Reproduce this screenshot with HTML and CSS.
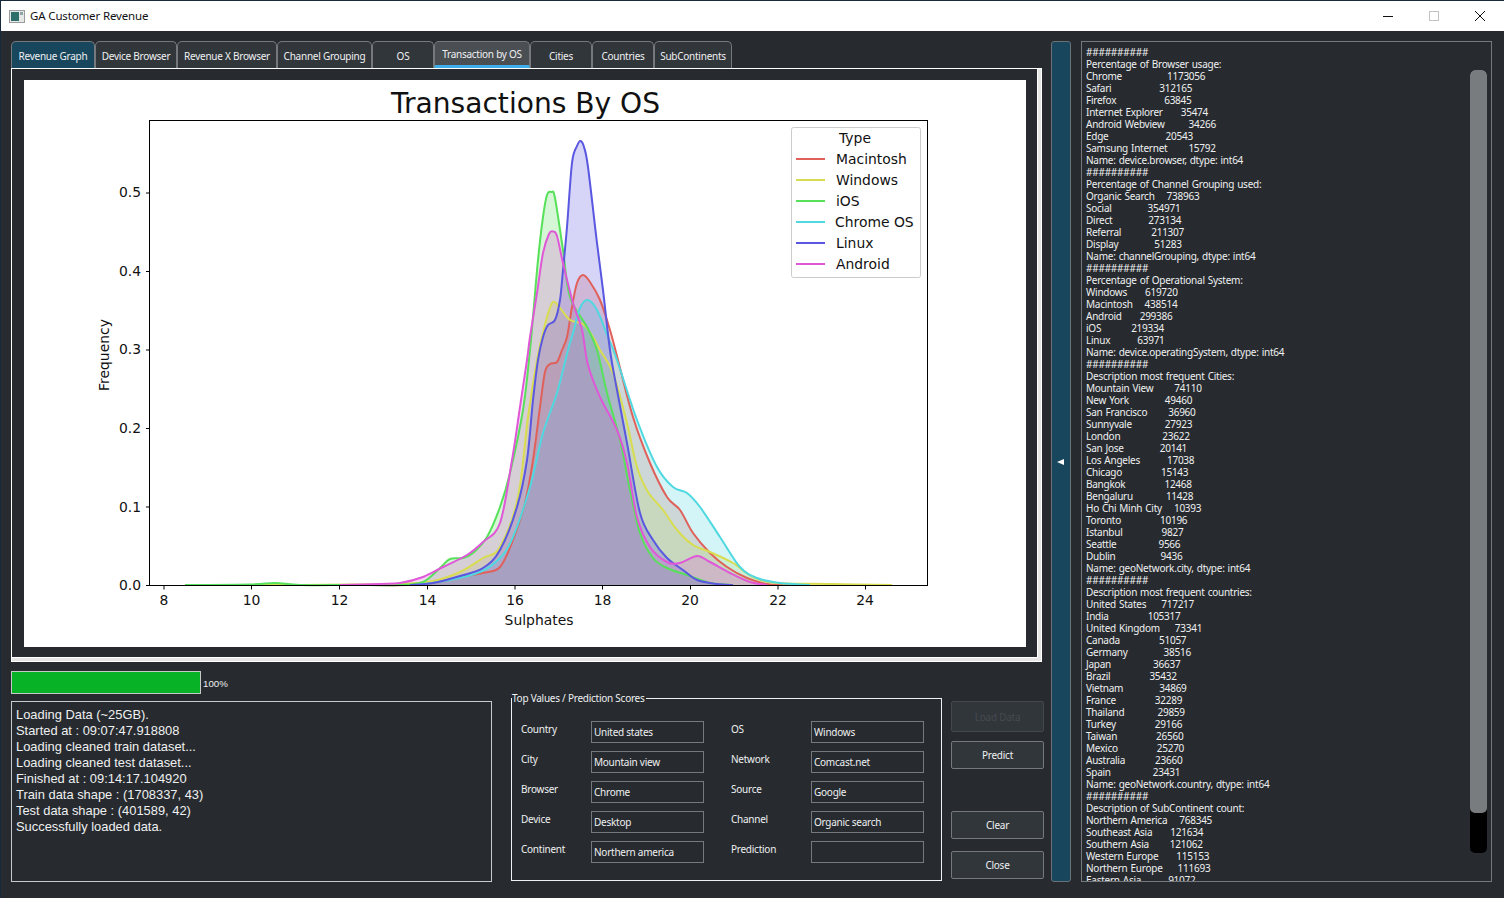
FILE: index.html
```html
<!DOCTYPE html>
<html>
<head>
    <title>GA Customer Revenue</title>
    <link rel="stylesheet" href="styles.css">
</head>
<body>
    <!-- Title bar -->
    <header class="titlebar">
        <svg class="app-icon" width="16" height="13" viewBox="0 0 16 13">
            <rect x="0.5" y="0.5" width="15" height="12" fill="#e6e8e8" stroke="#9a9d9d"/>
            <rect x="2" y="2" width="8" height="9" fill="#2f6f6a"/>
            <rect x="11" y="2" width="3" height="3" fill="#8fa5a5"/>
        </svg>
        <span class="app-title">GA Customer Revenue</span>
        <div class="win-controls">
            <svg width="46" height="30" viewBox="0 0 46 30"><path d="M18 15.5h10" stroke="#111" fill="none"/></svg>
            <svg width="46" height="30" viewBox="0 0 46 30"><rect x="18.5" y="10.5" width="9" height="9" stroke="#c4c4c4" fill="none"/></svg>
            <svg width="46" height="30" viewBox="0 0 46 30"><path d="M18 10l10 10M28 10l-10 10" stroke="#111" fill="none"/></svg>
        </div>
    </header>

    <div class="main">
        <div class="left">
            <nav class="tabs">
                <div class="tab first">Revenue Graph</div>
                <div class="tab">Device Browser</div>
                <div class="tab">Revenue X Browser</div>
                <div class="tab">Channel Grouping</div>
                <div class="tab">OS</div>
                <div class="tab current">Transaction by OS</div>
                <div class="tab">Cities</div>
                <div class="tab">Countries</div>
                <div class="tab">SubContinents</div>
            </nav>

            <section class="pane">
                <svg class="plot" width="1002" height="567" viewBox="24 80 1002 567">
                    <text class="plot-title" x="525.500" y="113">Transactions By OS</text>

                    <!-- KDE curves, chart.js smooths the points and adds the outlines -->
                    <g class="kde-fills">
                        <path class="mac" data-pts="185,585 300,585 350,585 407,585 433,583 460,577 483,573 500,567 513,540 525,503 533,460 540,407 545,372 550,364 557,362 562,350 567,337 572,307 577,283 583,275 590,282 600,300 610,330 618,360 633,417 650,463 667,497 680,510 693,533 710,553 727,567 747,578 767,584 790,585"/>
                        <path class="win" data-pts="185,585 300,585 360,584.5 400,584 433,581 460,572 483,558 500,547 518,497 528,417 537,360 543,333 547,317 553,302 560,308 570,320 583,324 593,337 600,350 613,373 627,423 637,467 648,492 663,510 677,530 693,545 710,552 733,563 753,577 777,583 830,584 892,585"/>
                        <path class="ios" data-pts="185,585 250,584.5 275,583 300,585 350,585 400,585 423,582 440,568 450,559 463,558 473,553 487,537 500,507 510,473 523,410 530,350 533,317 538,260 543,217 547,195 551.5,192 555,198 563,250 570,297 587,327 597,350 607,393 620,440 630,490 640,533 653,558 667,568 687,575 710,583 733,585"/>
                        <path class="chr" data-pts="417,585 450,580 480,572 500,558 513,537 530,487 543,433 557,393 568,350 573,333 580,308 587.5,300 597,310 608,337 617,360 637,420 657,467 673,487 687,493 700,507 720,537 740,567 757,578 780,583 810,585"/>
                        <path class="lin" data-pts="410,585 433,583 460,576 483,568 500,550 517,507 527,460 533,400 538,360 543,337 548,325 555,320 560,300 563,270 567,227 572,163 577,146 580.5,141 584,147 588,167 597,243 603,290 610,350 617,390 627,443 640,513 653,540 667,558 683,570 697,580 717,584 733,585"/>
                        <path class="and" data-pts="340,585 380,584 400,583 423,577 443,567 467,555 483,542 500,523 512,460 520,407 527,360 530,337 537,293 543,253 549,234 553,231.5 557,236 563,263 573,303 582,330 588,365 600,397 617,430 627,463 637,517 650,547 667,562 680,563 697,556 710,562 730,573 750,582 767,585"/>
                    </g>
                    <g class="kde-lines"></g>

                    <!-- axes -->
                    <rect class="frame" x="149.500" y="120.500" width="778" height="465"/>
                    <path class="ticks" d="M146 585h4M146 506.500h4M146 428h4M146 349.500h4M146 271h4M146 192.500h4M164 585v4M251.500 585v4M339.500 585v4M427.500 585v4M515 585v4M602.500 585v4M690.500 585v4M778 585v4M865.500 585v4"/>
                    <g class="y-labels">
                        <text x="141" y="590">0.0</text>
                        <text x="141" y="512">0.1</text>
                        <text x="141" y="433">0.2</text>
                        <text x="141" y="354">0.3</text>
                        <text x="141" y="276">0.4</text>
                        <text x="141" y="197">0.5</text>
                    </g>
                    <g class="x-labels">
                        <text x="164" y="605">8</text>
                        <text x="251.500" y="605">10</text>
                        <text x="339.500" y="605">12</text>
                        <text x="427.500" y="605">14</text>
                        <text x="515" y="605">16</text>
                        <text x="602.500" y="605">18</text>
                        <text x="690" y="605">20</text>
                        <text x="778" y="605">22</text>
                        <text x="865" y="605">24</text>
                    </g>
                    <text class="axis-label" x="539" y="625">Sulphates</text>
                    <text class="axis-label" transform="translate(109 355) rotate(-90)">Frequency</text>

                    <!-- legend -->
                    <rect class="legend-box" x="791.500" y="127.500" width="129" height="150" rx="2"/>
                    <text class="legend-title" x="855" y="143">Type</text>
                    <g class="legend-lines">
                        <path class="mac" d="M796 159h29"/>
                        <path class="win" d="M796 180h29"/>
                        <path class="ios" d="M796 201h29"/>
                        <path class="chr" d="M796 222h29"/>
                        <path class="lin" d="M796 243h29"/>
                        <path class="and" d="M796 264h29"/>
                    </g>
                    <g class="legend-text">
                        <text x="836" y="164">Macintosh</text>
                        <text x="836" y="185">Windows</text>
                        <text x="836" y="206">iOS</text>
                        <text x="835" y="227">Chrome OS</text>
                        <text x="836" y="248">Linux</text>
                        <text x="836" y="269">Android</text>
                    </g>
                </svg>
            </section>

            <div class="bottom">
                <div class="load-col">
                    <div class="progress-row">
                        <div class="progress"></div>
                        <span class="progress-text">100%</span>
                    </div>
                    <div class="log">Loading Data (~25GB).
Started at : 09:07:47.918808
Loading cleaned train dataset...
Loading cleaned test dataset...
Finished at : 09:14:17.104920
Train data shape : (1708337, 43)
Test data shape : (401589, 42)
Successfully loaded data.</div>
                </div>

                <fieldset class="scores">
                    <legend>Top Values / Prediction Scores</legend>
                    <div class="score-grid">
                        <label>Country</label><div class="field">United states</div>
                        <label>OS</label><div class="field">Windows</div>
                        <label>City</label><div class="field">Mountain view</div>
                        <label>Network</label><div class="field">Comcast.net</div>
                        <label>Browser</label><div class="field">Chrome</div>
                        <label>Source</label><div class="field">Google</div>
                        <label>Device</label><div class="field">Desktop</div>
                        <label>Channel</label><div class="field">Organic search</div>
                        <label>Continent</label><div class="field">Northern america</div>
                        <label>Prediction</label><div class="field"></div>
                    </div>
                </fieldset>

                <div class="buttons">
                    <button class="btn load" disabled>Load Data</button>
                    <button class="btn predict">Predict</button>
                    <button class="btn clear">Clear</button>
                    <button class="btn close">Close</button>
                </div>
            </div>
        </div>

        <div class="collapse"><span class="arrow"></span></div>

        <aside class="report">
            <pre class="report-text">##########
Percentage of Browser usage:
Chrome               1173056
Safari                312165
Firefox                63845
Internet Explorer      35474
Android Webview        34266
Edge                   20543
Samsung Internet       15792
Name: device.browser, dtype: int64
##########
Percentage of Channel Grouping used:
Organic Search    738963
Social            354971
Direct            273134
Referral          211307
Display            51283
Name: channelGrouping, dtype: int64
##########
Percentage of Operational System:
Windows      619720
Macintosh    438514
Android      299386
iOS          219334
Linux         63971
Name: device.operatingSystem, dtype: int64
##########
Description most frequent Cities:
Mountain View       74110
New York            49460
San Francisco       36960
Sunnyvale           27923
London              23622
San Jose            20141
Los Angeles         17038
Chicago             15143
Bangkok             12468
Bengaluru           11428
Ho Chi Minh City    10393
Toronto             10196
Istanbul             9827
Seattle              9566
Dublin               9436
Name: geoNetwork.city, dtype: int64
##########
Description most frequent countries:
United States     717217
India             105317
United Kingdom     73341
Canada             51057
Germany            38516
Japan              36637
Brazil             35432
Vietnam            34869
France             32289
Thailand           29859
Turkey             29166
Taiwan             26560
Mexico             25270
Australia          23660
Spain              23431
Name: geoNetwork.country, dtype: int64
##########
Description of SubContinent count:
Northern America    768345
Southeast Asia      121634
Southern Asia       121062
Western Europe      115153
Northern Europe     111693
Eastern Asia         91072</pre>
            <div class="scrollbar"><div class="scroll-thumb"></div></div>
        </aside>
    </div>
    <script src="chart.js"></script>
</body>
</html>
```
FILE: styles.css
```css
* {
    box-sizing: border-box;
}

body {
    margin: 0;
    width: 1504px;
    height: 898px;
    overflow: hidden;
    background-color: #272b2f;
    border-top: 1px solid #17293a;
    border-left: 1px solid #17293a;
    font-family: "Noto Sans", Arial, sans-serif;
    font-size: 10px;
    letter-spacing: -0.25px;
    color: #eff0f1;
}

/* Title bar */
.titlebar {
    display: flex;
    align-items: center;
    height: 30px;
    background-color: white;
    color: #111;
    padding-left: 8px;
}

.app-icon {
    margin-right: 5px;
}

.app-title {
    font-size: 11.5px;
    letter-spacing: -0.15px;
    margin-bottom: 2px;
}

.win-controls {
    display: flex;
    margin-left: auto;
    margin-right: 1px;
}

.win-controls svg {
    display: block;
}

/* Main layout */
.main {
    display: flex;
    padding: 10px 0 0 10px;
}

.left {
    width: 1033px;
}

/* Tabs */
.tabs {
    display: grid;
    grid-template-columns: 84px 82px 100px 95px 62px 96px 62px 62px 78px;
    height: 27px;
}

.tab {
    display: flex;
    align-items: center;
    justify-content: center;
    background-color: #31363b;
    border: 1px solid #76797c;
    border-bottom: none;
    border-radius: 5px 5px 0 0;
    white-space: nowrap;
    padding-top: 2px;
}

.tab.first {
    background-color: #18465d;
}

.tab.current {
    background-color: #4a4f54;
    border-bottom: 3px solid #3daee9;
    padding-top: 0;
}

/* Graph pane */
.pane {
    width: 1031px;
    height: 594px;
    background-color: #272b2f;
    border: solid #e6e6e6;
    border-width: 0 4px 4px 0;
    outline: 1px solid white;
    outline-offset: -1px;
    padding: 12px 0 0 13px;
    box-shadow: inset 1px 1px 0 white, inset -1px -1px 0 white;
}

.plot {
    display: block;
    background-color: white;
    font-family: "DejaVu Sans", sans-serif;
    font-size: 13.9px;
    letter-spacing: 0;
    fill: #111;
}

.plot-title {
    font-size: 28.1px;
    text-anchor: middle;
}

.mac { stroke: #e0605a; fill: #e0605a; }
.win { stroke: #d8dc50; fill: #d8dc50; }
.ios { stroke: #57e05a; fill: #57e05a; }
.chr { stroke: #4fd8e0; fill: #4fd8e0; }
.lin { stroke: #5a57e0; fill: #5a57e0; }
.and { stroke: #e057d8; fill: #e057d8; }

.kde-fills path {
    stroke: none;
    fill-opacity: 0.25;
}

.kde-lines path {
    fill: none;
    stroke-width: 2;
    stroke-linejoin: round;
}

.frame {
    fill: none;
    stroke: black;
    stroke-width: 1;
}

.ticks {
    fill: none;
    stroke: black;
    transform: translateY(0.5px);
}

.y-labels {
    text-anchor: end;
}

.x-labels {
    text-anchor: middle;
}

.axis-label {
    text-anchor: middle;
}

.legend-box {
    fill: white;
    fill-opacity: 0.8;
    stroke: #ccc;
}

.legend-title {
    text-anchor: middle;
}

.legend-lines path {
    stroke-width: 2;
    fill: none;
}

/* Bottom row */
.bottom {
    display: flex;
    margin-top: 9px;
}

.load-col {
    width: 481px;
    margin-right: 19px;
}

.progress-row {
    display: flex;
    align-items: center;
    height: 23px;
}

.progress {
    width: 190px;
    height: 23px;
    background-color: #07b227;
    border: 1px solid #c5cac6;
}

.progress-text {
    margin-left: 2px;
    margin-top: 2px;
    font-family: "Liberation Sans", Arial, sans-serif;
    font-size: 9.7px;
    letter-spacing: 0;
}

.log {
    height: 181px;
    margin-top: 7px;
    padding: 5px 4px;
    border: 1px solid #c8cbcc;
    font-family: "Liberation Sans", Arial, sans-serif;
    font-size: 12.9px;
    letter-spacing: 0;
    line-height: 16px;
    white-space: pre;
}

.scores {
    width: 431px;
    height: 188px;
    margin: 22px 9px 0 0;
    padding: 0;
    border: 1px solid #eff0f1;
    min-width: 0;
}

.scores legend {
    padding: 0 1px 0 0;
    margin-left: 0;
    line-height: 10px;
}

.score-grid {
    display: grid;
    grid-template-columns: 70px 113px 107px 113px;
    grid-auto-rows: 22px;
    row-gap: 8px;
    padding: 18px 0 0 9px;
}

.score-grid label {
    margin-top: 1px;
    line-height: 14px;
}

.score-grid label:nth-of-type(even) {
    margin-left: 27px;
}

.field {
    border: 1px solid #76797c;
    padding: 2px 2px 0;
    line-height: 17px;
}

.buttons {
    display: flex;
    flex-direction: column;
    width: 93px;
    margin-top: 30px;
}

.btn {
    background-color: #31363b;
    border: 1px solid #76797c;
    border-radius: 2px;
    color: #eff0f1;
    font: inherit;
    letter-spacing: inherit;
    height: 28px;
    padding: 0;
}

.btn.load {
    height: 31px;
    color: #454a4f;
    border-color: #44484c;
}

.btn.predict {
    margin-top: 9px;
}

.btn.clear {
    margin-top: 42px;
}

.btn.close {
    margin-top: 12px;
}

/* Side toggle */
.collapse {
    position: relative;
    width: 20px;
    height: 841px;
    margin-left: 7px;
    background-color: #18465d;
    border: 1px solid #6a7277;
    border-radius: 3px;
}

.arrow {
    position: absolute;
    left: 5px;
    top: 417px;
    border-style: solid;
    border-width: 3.500px 7px 3.500px 0;
    border-color: transparent white transparent transparent;
}

/* Text report */
.report {
    position: relative;
    width: 411px;
    height: 841px;
    margin-left: 10px;
    border: 1px solid #76797c;
    overflow: hidden;
}

.report-text {
    margin: 0;
    padding: 4px 0 0 4px;
    font-family: inherit;
    font-size: 10px;
    line-height: 12px;
    word-spacing: 0.65px;
}

.scrollbar {
    position: absolute;
    left: 388px;
    top: 28px;
    width: 17px;
    height: 783px;
    background-color: black;
    border-radius: 5px;
    overflow: hidden;
}

.scroll-thumb {
    height: 743px;
    background-color: #797c7f;
    border-radius: 5px;
}
```
FILE: chart.js
```js
// smooth each curve's data-pts into a path (catmull-rom), then copy it as an outline on top of all fills
var lines = document.querySelector('.kde-lines');

document.querySelectorAll('.kde-fills path').forEach(function (el) {
    var pts = el.dataset.pts.trim().split(/\s+/).map(function (p) {
        return p.split(',').map(Number);
    });
    var d = 'M' + pts[0].join(' ');
    for (var i = 0; i < pts.length - 1; i++) {
        var p0 = pts[i - 1] || pts[i];
        var p1 = pts[i];
        var p2 = pts[i + 1];
        var p3 = pts[i + 2] || p2;
        d += ' C' + (p1[0] + (p2[0] - p0[0]) / 6) + ' ' + (p1[1] + (p2[1] - p0[1]) / 6) +
             ' ' + (p2[0] - (p3[0] - p1[0]) / 6) + ' ' + (p2[1] - (p3[1] - p1[1]) / 6) +
             ' ' + p2[0] + ' ' + p2[1];
    }
    el.setAttribute('d', d);
    lines.appendChild(el.cloneNode());
});
```
